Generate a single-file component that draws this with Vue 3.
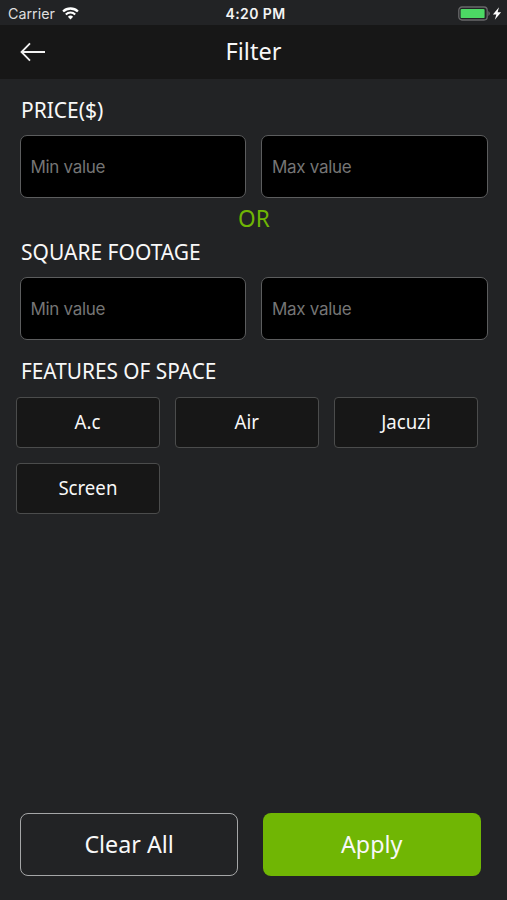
<script setup>
const groups = [
  { title: 'PRICE($)', cls: 'price' },
  { title: 'SQUARE FOOTAGE', cls: 'footage' },
]
const features = ['A.c', 'Air', 'Jacuzi', 'Screen']
</script>

<template>
  <main class="screen">
    <div class="status">
      <div class="carrier">
        <span>Carrier</span>
        <svg class="wifi" width="17" height="13" viewBox="0 0 17 13">
          <path d="M1.1 4.5 A10.7 10.7 0 0 1 15.9 4.5" fill="none" stroke="#fff" stroke-width="2.4" />
          <path d="M3.8 7.4 A6.8 6.8 0 0 1 13.2 7.4" fill="none" stroke="#fff" stroke-width="2.1" />
          <path d="M8.5 12.4 L5.9 9.8 A3.8 3.8 0 0 1 11.1 9.8 Z" fill="#fff" />
        </svg>
      </div>
      <span class="clock">4:20 PM</span>
      <svg class="battery" width="45" height="16" viewBox="0 0 45 16">
        <rect x=".8" y="1" width="28.4" height="13" rx="3.2" fill="none" stroke="#68686a" stroke-width="1.3" />
        <rect x="2.6" y="2.9" width="24" height="9.2" rx="1.2" fill="#4cd964" />
        <path d="M30.3 5 Q33.6 7.5 30.3 10 Z" fill="#68686a" />
        <path d="M41 1.2 L34.9 8.4 H38.4 L36.8 13.8 L43.1 6.3 H39.6 Z" fill="#fff" />
      </svg>
    </div>

    <header class="bar">
      <svg class="back" width="26" height="20" viewBox="0 0 26 20">
        <path d="M25 10 H1.5 M10 1.3 L1.5 10 L10 18.7" fill="none" stroke="#f2f2f2" stroke-width="1.8" />
      </svg>
      <h1><span class="label">Filter</span></h1>
    </header>

    <section class="form">
      <template v-for="(g, i) in groups" :key="g.title">
        <p v-if="i" class="or"><span class="label">OR</span></p>
        <h2 :class="g.cls"><span class="label">{{ g.title }}</span></h2>
        <div class="range">
          <div class="field">Min value</div>
          <div class="field">Max value</div>
        </div>
      </template>
      <h2 class="features"><span class="label">FEATURES OF SPACE</span></h2>
    </section>

    <div class="tiles">
      <button v-for="f in features" :key="f" class="tile"><span class="label">{{ f }}</span></button>
    </div>

    <footer class="actions">
      <button class="action clear"><span class="label">Clear All</span></button>
      <button class="action apply"><span class="label">Apply</span></button>
    </footer>
  </main>
</template>

<style>
body { margin: 0; background: #222325; }
</style>

<style scoped>
* { box-sizing: border-box; }
.screen {
  width: 507px; height: 900px; display: flex; flex-direction: column;
  background: #222325; color: #f8f8f8; overflow: hidden;
  font-family: "Noto Sans", "Open Sans", sans-serif;
}
h1, h2, p { margin: 0; font-weight: 400; }
button { font-family: inherit; color: inherit; padding: 0; }
.label { display: inline-block; white-space: nowrap; }
.status {
  height: 25px; display: grid; grid-template-columns: 1fr auto 1fr; align-items: center;
  padding: 2px 4px 0 8px; font: 14.3px/20px Inter, sans-serif; color: #dededf;
}
.carrier { display: flex; align-items: center; gap: 7px; }
.clock { font-size: 14px; font-weight: 600; color: #f4f4f4; letter-spacing: .4px; }
.battery { justify-self: end; }
.bar {
  height: 54px; display: grid; grid-template-columns: 1fr auto 1fr; align-items: center;
  padding: 0 20px; background: #171717;
}
h1 { font-size: 24px; line-height: 32px; padding-bottom: 2px; }
h1 .label { transform: scaleX(.98); }
.form { padding: 0 19.5px; }
h2 { font-size: 21.5px; line-height: 30px; padding-left: 1px; }
h2 .label { transform: scaleX(.976); transform-origin: 0 50%; }
.price { margin-top: 16px; }
.range { display: grid; grid-template-columns: 1fr 1fr; gap: 15px; margin-top: 10px; }
.field {
  height: 63px; border: 1px solid #5c5d5e; border-radius: 7px; background: #000;
  padding-left: 10px; font: 17px/62px Inter, sans-serif; letter-spacing: -.3px; color: #757575;
}
.or { font-size: 24px; line-height: 32px; margin-top: 4px; text-align: center; color: #70b604; }
.or .label { transform: scaleX(.94); }
.footage { margin-top: 3px; }
.features { margin-top: 16px; }
.features .label { transform: scaleX(.968); }
.tiles {
  display: grid; grid-template-columns: repeat(3, 144px); grid-auto-rows: 51px;
  gap: 15px; padding: 11px 0 0 16px;
}
.tile { border: 1px solid #4b4c4c; border-radius: 4px; background: #171717; font-size: 19.5px; padding-bottom: 2px; }
.tile .label { transform: scaleX(.955); }
.actions {
  margin-top: auto; padding: 0 26px 24px 20px;
  display: grid; grid-template-columns: 1fr 1fr; gap: 25px;
}
.action { height: 63px; border-radius: 8px; font-size: 24px; padding-bottom: 2px; }
.action .label { transform: scaleX(.97); }
.clear { border: 1.5px solid #a5a6a7; background: transparent; }
.apply { border: 0; background: #70b604; }
</style>
